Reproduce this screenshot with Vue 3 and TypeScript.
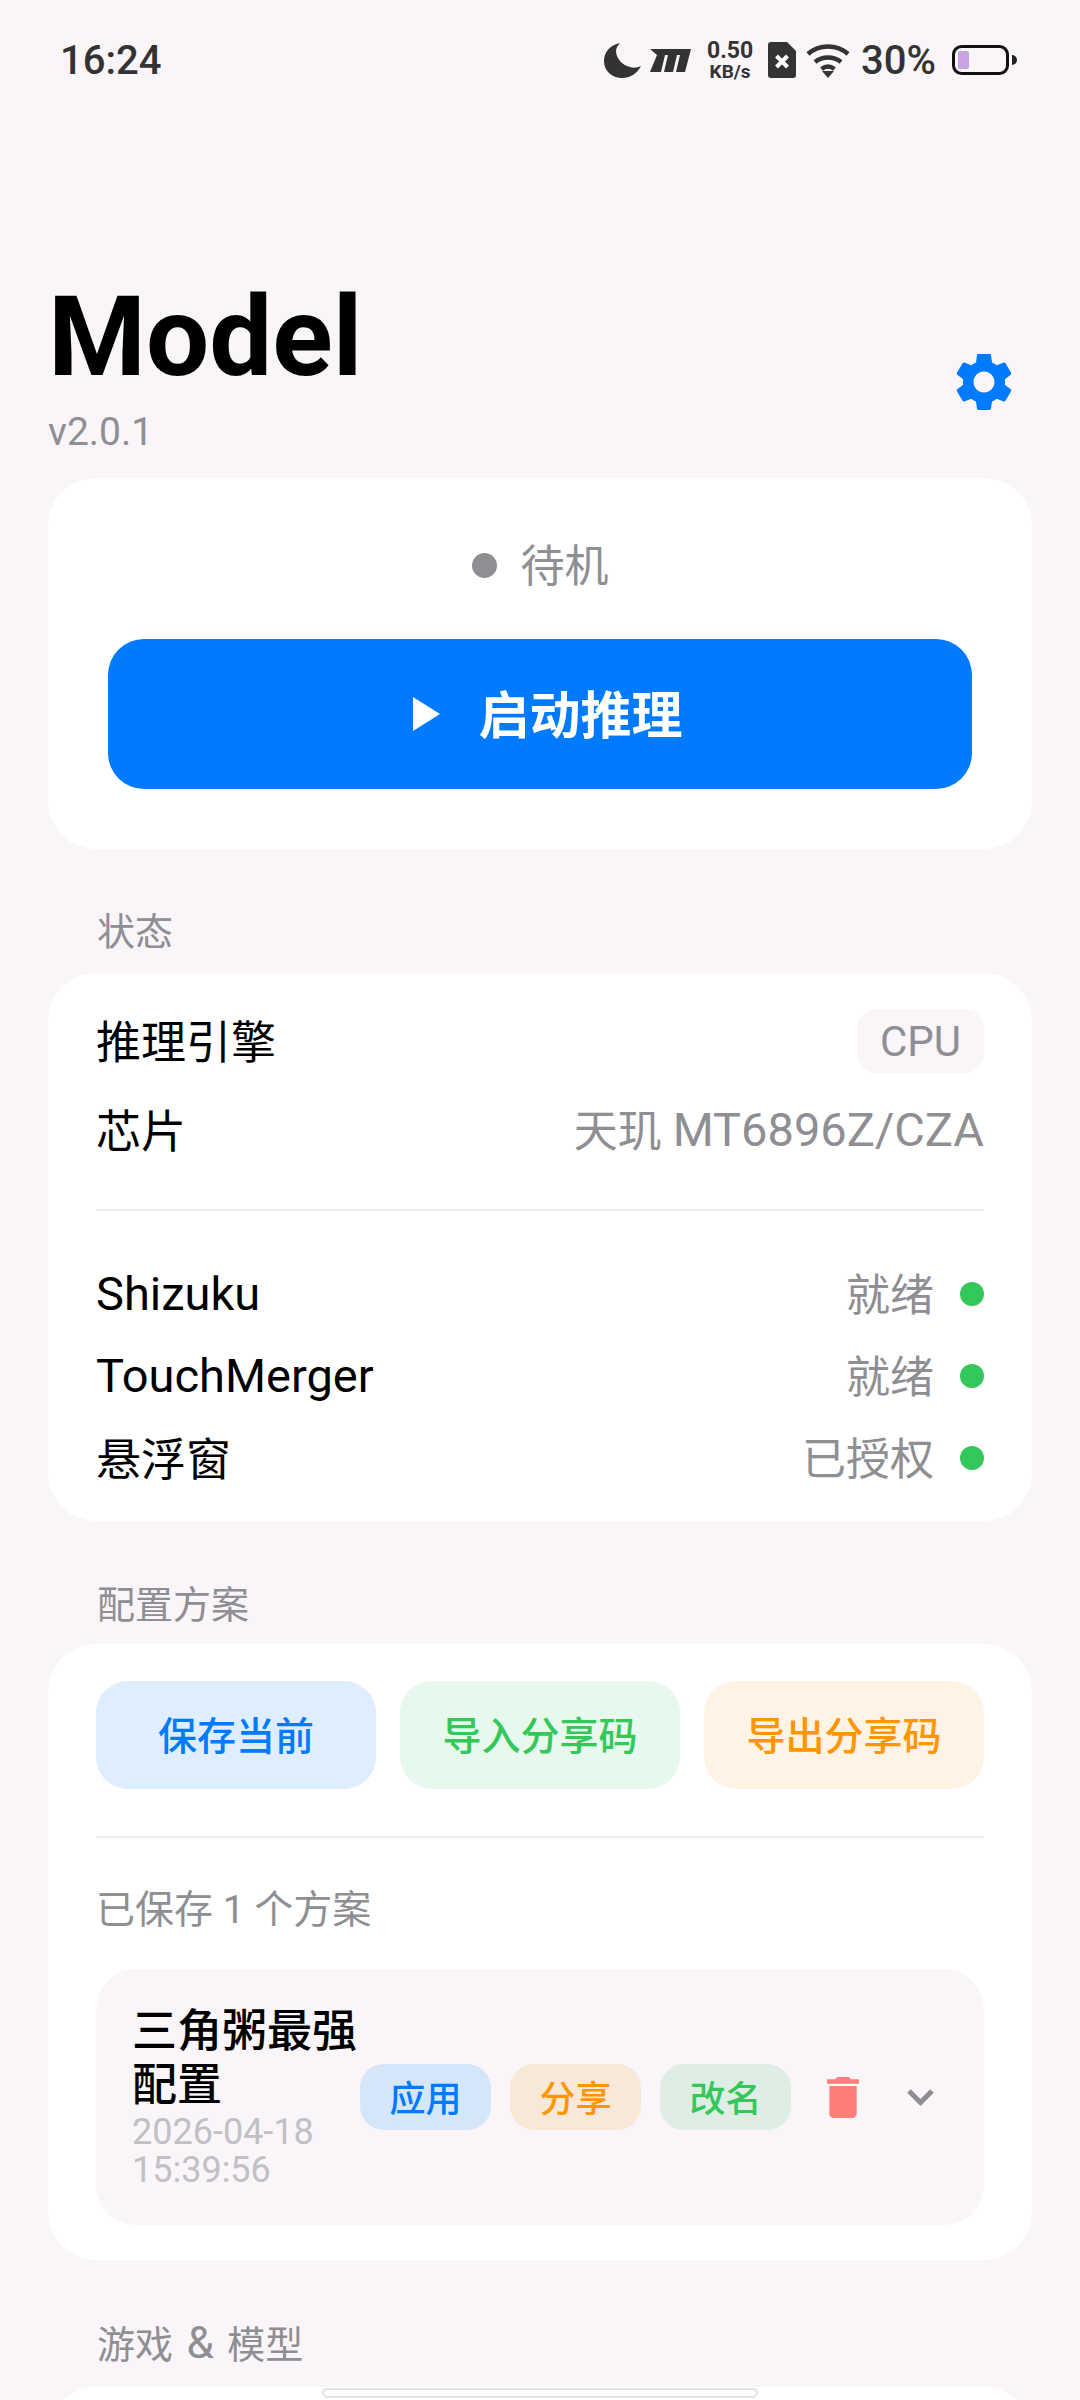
<script setup lang="ts">
interface InfoRow {
  label: string;
  value: string;
  latin?: boolean;
}

const serviceRows: InfoRow[] = [
  { label: 'Shizuku', value: '就绪', latin: true },
  { label: 'TouchMerger', value: '就绪', latin: true },
  { label: '悬浮窗', value: '已授权' },
];

const configActions = [
  { text: '保存当前', kind: 'blue' },
  { text: '导入分享码', kind: 'green' },
  { text: '导出分享码', kind: 'orange' },
];

const planActions = [
  { text: '应用', kind: 'blue' },
  { text: '分享', kind: 'orange' },
  { text: '改名', kind: 'green' },
];
</script>

<template>
  <div class="page">
    <div class="status-bar">
      <span class="clock">16:24</span>
      <div class="status-icons">
        <svg class="ic-moon" viewBox="0 0 37 35"><path d="M16 0C6 2 0 9 0 18c0 10 8 17 18 17 8 0 15-4 19-12-4 2-8 2-11 1-8-2-14-9-14-16 0-3 2-6 4-8z" /></svg>
        <svg class="ic-m" viewBox="0 0 41 24"><path d="M0 1h41l-6 23h-9l4-17h-3l-4 17h-9l4-17h-3l-4 17H0L7 7z" /></svg>
        <div class="speed"><span class="speed-num">0.50</span><span class="speed-unit">KB/s</span></div>
        <svg class="ic-sim" viewBox="0 0 28 36">
          <path d="M3 0h16l9 9v24a3 3 0 0 1-3 3H3a3 3 0 0 1-3-3V3a3 3 0 0 1 3-3z" fill="#333" />
          <path d="M8.500 14l11 11m0-11l-11 11" stroke="#fff" stroke-width="4" fill="none" />
        </svg>
        <svg class="ic-wifi" viewBox="0 0 44 36" fill="none" stroke="#333" stroke-width="4.500">
          <path d="M2 12C13 2 31 2 42 12" />
          <path d="M9 20c7.500-6 18.500-6 26 0" />
          <path d="M15.500 27c4-3 9-3 13 0" />
          <path d="M16 29h12l-6 7z" fill="#333" stroke="none" />
        </svg>
        <span class="percent">30%</span>
        <svg class="ic-battery" viewBox="0 0 65 30">
          <rect x="1.500" y="1.500" width="54" height="27" rx="8" fill="none" stroke="#111" stroke-width="3" />
          <rect x="6" y="6" width="11" height="18" rx="2" fill="#c9a2e2" />
          <path d="M60 10a5 5 0 0 1 0 10z" fill="#222" />
        </svg>
      </div>
    </div>

    <header class="header">
      <div class="brand">
        <h1 class="title">Model</h1>
        <div class="version">v2.0.1</div>
      </div>
      <svg class="gear" viewBox="0 0 24 24">
        <path d="M19.140 12.940c.04-.3.06-.61.06-.94 0-.32-.02-.64-.07-.94l2.030-1.580c.18-.14.23-.41.12-.61l-1.920-3.320c-.12-.22-.37-.29-.59-.22l-2.390.96c-.5-.38-1.030-.7-1.620-.94l-.36-2.540c-.04-.24-.24-.41-.48-.41h-3.840c-.24 0-.43.17-.47.41l-.36 2.540c-.59.24-1.130.57-1.620.94l-2.390-.96c-.22-.08-.47 0-.59.22L2.740 8.870c-.12.21-.08.47.12.61l2.030 1.580c-.05.3-.09.63-.09.94s.02.64.07.94l-2.030 1.580c-.18.14-.23.41-.12.61l1.920 3.320c.12.22.37.29.59.22l2.390-.96c.5.38 1.030.7 1.620.94l.36 2.540c.05.24.24.41.48.41h3.840c.24 0 .44-.17.47-.41l.36-2.540c.59-.24 1.130-.56 1.620-.94l2.390.96c.22.08.47 0 .59-.22l1.920-3.320c.12-.22.07-.47-.12-.61l-2.010-1.580zM12 15.600c-1.980 0-3.600-1.620-3.600-3.600s1.620-3.600 3.600-3.600 3.600 1.620 3.600 3.600-1.620 3.600-3.600 3.600z" />
      </svg>
    </header>

    <section class="card hero">
      <div class="idle"><i class="dot dot--idle"></i><span class="cjk">待机</span></div>
      <button class="start">
        <svg class="play" viewBox="0 0 27 34"><path d="M0 0l27 17L0 34z" /></svg>
        <span class="cjk">启动推理</span>
      </button>
    </section>

    <div class="section-label label-status">状态</div>
    <section class="card status-card">
      <div class="row row--engine">
        <span class="cjk name">推理引擎</span>
        <span class="tag">CPU</span>
      </div>
      <div class="row row--chip">
        <span class="cjk name">芯片</span>
        <span class="value"><span class="cjk">天玑 </span><span class="latin">MT6896Z/CZA</span></span>
      </div>
      <div class="divider"></div>
      <div class="services">
        <div v-for="row in serviceRows" :key="row.label" class="row row--service">
          <span :class="row.latin ? 'latin' : 'cjk name'">{{ row.label }}</span>
          <span class="service-state">
            <span class="value cjk">{{ row.value }}</span>
            <i class="dot dot--ok"></i>
          </span>
        </div>
      </div>
    </section>

    <div class="section-label label-config">配置方案</div>
    <section class="card config-card">
      <div class="config-actions">
        <button v-for="a in configActions" :key="a.text" :class="['config-btn', `config-btn--${a.kind}`]">{{ a.text }}</button>
      </div>
      <div class="divider"></div>
      <div class="saved-count">已保存 1 个方案</div>
      <div class="plan">
        <div class="plan-info">
          <div class="plan-name">三角粥最强配置</div>
          <div class="plan-date">2026-04-18 15:39:56</div>
        </div>
        <div class="plan-actions">
          <button v-for="a in planActions" :key="a.text" :class="['chip', `chip--${a.kind}`]">{{ a.text }}</button>
        </div>
        <svg class="trash" viewBox="5 3 14 18"><path d="M6 19c0 1.100.9 2 2 2h8c1.100 0 2-.9 2-2V7H6v12zM19 4h-3.500l-1-1h-5l-1 1H5v2h14V4z" /></svg>
        <svg class="chevron" viewBox="0 0 27 17"><path d="M2 2l11.500 11.500L25 2" /></svg>
      </div>
    </section>

    <div class="section-label label-games">游戏 <span class="amp">&amp;</span> 模型</div>
    <section class="card games-card"></section>

    <div class="home-pill"></div>
  </div>
</template>

<style>
html,
body {
  margin: 0;
  background: #f9f5f9;
}
</style>

<style scoped>
.page {
  position: relative;
  width: 1080px;
  height: 2400px;
  overflow: hidden;
  background: #f9f5f9;
  color: #000;
  font-family: Roboto, "Noto Sans CJK SC", sans-serif;
}

.status-bar {
  display: flex;
  align-items: center;
  justify-content: space-between;
  height: 120px;
  padding: 0 63px 0 60px;
  box-sizing: border-box;
  color: #333;
}

.clock {
  font-size: 40px;
  font-weight: 500;
}

.status-icons {
  display: flex;
  align-items: center;
}

.ic-moon {
  width: 37px;
  height: 35px;
  fill: #333;
}

.ic-m {
  width: 41px;
  height: 24px;
  margin-left: 9px;
  fill: #333;
}

.speed {
  display: flex;
  flex-direction: column;
  align-items: center;
  width: 46px;
  margin-left: 16px;
  font-weight: 700;
}

.speed-num {
  font-size: 23px;
  line-height: 23px;
}

.speed-unit {
  font-size: 19px;
  line-height: 19px;
}

.ic-sim {
  width: 28px;
  height: 36px;
  margin-left: 15px;
}

.ic-wifi {
  width: 44px;
  height: 36px;
  margin-left: 10px;
}

.percent {
  margin-left: 11px;
  font-size: 40px;
  font-weight: 500;
}

.ic-battery {
  width: 65px;
  height: 30px;
  margin-left: 16px;
}

.header {
  display: flex;
  align-items: flex-end;
  justify-content: space-between;
  height: 358px;
  padding: 0 48px;
  box-sizing: border-box;
}

.brand {
  padding-bottom: 21px;
}

.title {
  margin: 0;
  font-size: 112px;
  font-weight: 700;
  line-height: 120px;
}

.version {
  margin-top: 10px;
  font-size: 39px;
  line-height: 50px;
  color: #8e8e93;
}

.gear {
  width: 70px;
  height: 70px;
  margin: 0 13px 61px 0;
  fill: #007aff;
}

.card {
  margin: 0 48px;
  background: #fff;
  border-radius: 48px;
}

/* CJK glyphs sit low in the line box, lift them a little */
.cjk {
  padding-bottom: 4px;
}

.name {
  font-size: 45px;
}

.latin {
  padding-bottom: 2px;
  font-size: 47px;
}

.hero {
  height: 371px;
  padding: 60px;
  box-sizing: border-box;
}

.idle {
  display: flex;
  align-items: center;
  justify-content: center;
  gap: 24px;
  height: 54px;
  font-size: 44px;
  color: #8e8e93;
}

.dot {
  display: block;
  flex: none;
  border-radius: 50%;
}

.dot--idle {
  width: 25px;
  height: 25px;
  background: #8e8e93;
}

.dot--ok {
  width: 24px;
  height: 24px;
  background: #34c759;
}

.start {
  display: flex;
  align-items: center;
  justify-content: center;
  gap: 38px;
  width: 100%;
  height: 150px;
  margin-top: 47px;
  padding: 0 0 0 16px;
  border: 0;
  border-radius: 36px;
  background: #007aff;
  color: #fff;
  font-family: inherit;
  font-size: 51px;
  font-weight: 700;
}

.play {
  width: 27px;
  height: 34px;
  fill: #fff;
}

.section-label {
  padding-left: 97px;
  font-size: 38px;
  line-height: 44px;
  color: #8e8e93;
}

.amp {
  margin: 0 4px;
  font-size: 44px;
}

.label-status {
  margin-top: 61px;
}

.label-config {
  margin-top: 62px;
}

.label-games {
  margin-top: 61px;
}

.status-card {
  margin-top: 19px;
  height: 548px;
  padding: 36px 48px 0;
  box-sizing: border-box;
}

.row {
  display: flex;
  align-items: center;
  justify-content: space-between;
  font-size: 44px;
}

.row--engine {
  height: 64px;
}

.row--chip {
  height: 64px;
  margin-top: 25px;
}

.tag {
  display: flex;
  align-items: center;
  height: 64px;
  padding: 0 23px;
  border-radius: 20px;
  background: #f9f5f9;
  color: #8e8e93;
  font-size: 42px;
}

.value {
  display: flex;
  align-items: center;
  color: #8e8e93;
}

.value .cjk {
  white-space: pre;
}

.divider {
  height: 2px;
  background: #f0edf1;
}

.status-card .divider {
  margin-top: 47px;
}

.services {
  margin-top: 42px;
}

.row--service {
  height: 82px;
}

.service-state {
  display: flex;
  align-items: center;
  gap: 26px;
}

.config-card {
  margin-top: 17px;
  height: 616px;
  padding: 37px 48px 0;
  box-sizing: border-box;
}

.config-actions {
  display: flex;
  gap: 24px;
}

.config-btn {
  flex: 1;
  height: 108px;
  padding: 0 0 5px;
  border: 0;
  border-radius: 32px;
  font-family: inherit;
  font-size: 39px;
  font-weight: 500;
}

.config-btn--blue {
  background: #dfeeff;
  color: #007aff;
}

.config-btn--green {
  background: #e6f9ec;
  color: #34c759;
}

.config-btn--orange {
  background: #fff3e5;
  color: #ff9500;
}

.config-card .divider {
  margin-top: 47px;
}

.saved-count {
  margin-top: 48px;
  font-size: 39px;
  line-height: 48px;
  color: #8e8e93;
}

.plan {
  display: flex;
  align-items: center;
  height: 256px;
  margin-top: 35px;
  padding: 0 38px 0 36px;
  box-sizing: border-box;
  border-radius: 40px;
  background: #f9f5f9;
}

.plan-info {
  flex: none;
  width: 228px;
}

.plan-name {
  font-size: 45px;
  font-weight: 500;
  line-height: 54px;
}

.plan-date {
  font-size: 36px;
  line-height: 38px;
  color: #c0c0c5;
}

.plan-actions {
  display: flex;
  gap: 19px;
}

.chip {
  width: 131px;
  height: 66px;
  padding: 0 0 3px;
  border: 0;
  border-radius: 24px;
  font-family: inherit;
  font-size: 36px;
  font-weight: 500;
}

.chip--blue {
  background: #d4e6f8;
  color: #007aff;
}

.chip--orange {
  background: #f7e8d8;
  color: #ff9500;
}

.chip--green {
  background: #dfeee5;
  color: #34c759;
}

.trash {
  flex: none;
  width: 32px;
  height: 41px;
  margin-left: 36px;
  fill: #ff7f78;
}

.chevron {
  flex: none;
  width: 27px;
  height: 17px;
  margin-left: 48px;
  fill: none;
  stroke: #8e8e93;
  stroke-width: 5;
}

.games-card {
  margin-top: 20px;
  height: 200px;
}

.home-pill {
  position: absolute;
  left: 322px;
  bottom: 2px;
  width: 436px;
  height: 10px;
  box-sizing: border-box;
  border: 2px solid #e4e4e6;
  border-radius: 5px;
  background: #fff;
}
</style>
